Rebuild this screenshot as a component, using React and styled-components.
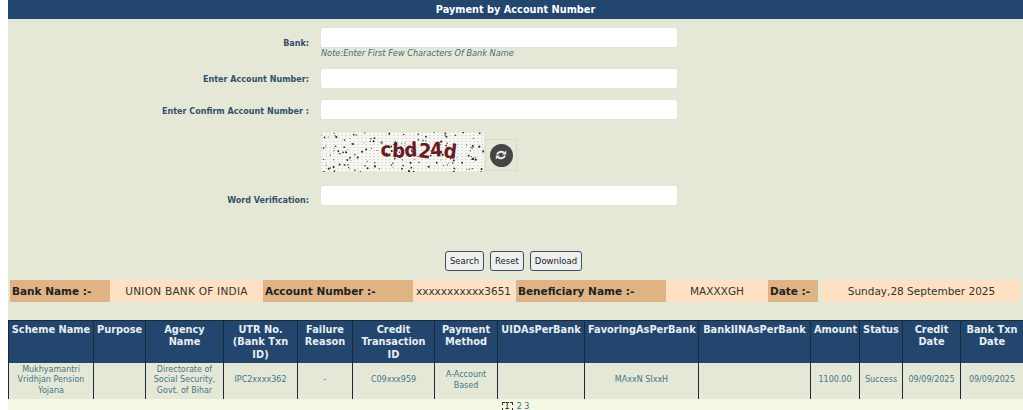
import React from "react";
import styled, { createGlobalStyle } from "styled-components";

const Global = createGlobalStyle`
  html, body {
    margin: 0;
    padding: 0;
    background: #fff;
    overflow: hidden;
  }
  body {
    font-family: "DejaVu Sans", Verdana, sans-serif;
  }
`;

const Page = styled.div`
  width: 1023px;
  height: 410px;
  padding-left: 8px;
  box-sizing: border-box;
  background: #e5e8d6;
  background-clip: content-box;
  overflow: hidden;
`;

const Header = styled.div`
  height: 19px;
  line-height: 19px;
  background: #23466f;
  color: #fff;
  font-size: 9.75px;
  font-weight: bold;
  text-align: center;
`;

const Form = styled.div`
  padding-top: 9px;
`;

const Row = styled.div`
  display: grid;
  grid-template-columns: 301px 356px;
  column-gap: 12px;
  align-items: center;
  margin-bottom: ${(p) => p.$mb || 0}px;
`;

const Label = styled.label`
  font-size: 8.05px;
  font-weight: bold;
  color: #34506a;
  text-align: right;
  padding-top: ${(p) => p.$pt || 0}px;
`;

const Input = styled.input`
  display: block;
  width: 100%;
  height: 19px;
  box-sizing: border-box;
  border: none;
  border-radius: 2px;
  background: #fff;
  box-shadow: 0 0 1px #c8cabc;
`;

const Note = styled.div`
  height: 9px;
  margin-top: 2px;
  font-size: 8.2px;
  line-height: 9px;
  font-style: italic;
  color: #3b6f7d;
  white-space: nowrap;
`;

const CaptchaWrap = styled.div`
  display: flex;
  align-items: flex-end;
  gap: 1px;
`;

const CaptchaImg = styled.svg`
  display: block;
  width: 163px;
  height: 40px;
`;

const RefreshBtn = styled.div`
  width: 32px;
  height: 32px;
  margin-bottom: 1px;
  box-sizing: border-box;
  border: 1px solid #d9dccb;
  display: flex;
  align-items: center;
  justify-content: center;
`;

const RefreshCircle = styled.div`
  width: 23px;
  height: 23px;
  border-radius: 50%;
  background: #454545;
  display: flex;
  align-items: center;
  justify-content: center;
`;

const Buttons = styled.div`
  display: flex;
  justify-content: center;
  gap: 6px;
  padding-top: 46px;
  padding-right: 4px;
`;

const Button = styled.button`
  height: 20px;
  padding: 0 4px;
  box-sizing: border-box;
  border: 1px solid #3d4f5e;
  border-radius: 3px;
  background: #edf0ee;
  color: #222;
  font-family: "DejaVu Sans", sans-serif;
  font-size: 8.5px;
  cursor: pointer;
`;

const Summary = styled.div`
  display: grid;
  grid-template-columns: 100px 153px 150px 103px 150px 102px 50px 205px;
  height: 22px;
  margin: 9px 0 18px 2px;
  line-height: 22px;
  font-size: 10.5px;
`;

const SumLabel = styled.div`
  background: #dfb384;
  color: #222;
  font-weight: bold;
  padding-left: 2px;
  white-space: nowrap;
`;

const SumValue = styled.div`
  background: #fde1c2;
  color: #333;
  text-align: center;
  letter-spacing: ${(p) => p.$ls || 0}px;
  margin-left: ${(p) => p.$ml || 0}px;
  margin-right: ${(p) => p.$mr || 0}px;
  white-space: nowrap;
`;

const Table = styled.table`
  width: 1015px;
  border-collapse: collapse;
  table-layout: fixed;
`;

const Th = styled.th`
  width: ${(p) => p.$w}px;
  height: 42px;
  box-sizing: border-box;
  padding: 3px ${(p) => p.$px ?? 3}px 0;
  vertical-align: top;
  background: #23466f;
  color: #e9eef2;
  border: 1px solid #1b2a38;
  border-width: 1px 1px 0;
  font-size: 9.8px;
  line-height: 12.4px;
  font-weight: bold;
  text-align: center;
`;

const Td = styled.td`
  height: 36px;
  padding: 0 1px;
  background: #e5e8d6;
  color: #44758c;
  border: 1px solid #1b2a38;
  border-width: 0 1px;
  font-size: 8px;
  line-height: 10.5px;
  text-align: center;
`;

const Pager = styled.div`
  height: 11px;
  background: #f6f8e6;
  text-align: center;
  font-size: 8px;
  line-height: 15px;
  color: #3e6a80;
  overflow: hidden;
`;

const PagerCurrent = styled.span`
  display: inline-block;
  height: 9px;
  line-height: 9px;
  outline: 1px dashed #333;
  outline-offset: -1px;
  color: #111;
  padding: 0 3px;
  margin-right: 4px;
`;

const columns = [
  { name: "Scheme Name", w: 85, px: 0, value: "Mukhyamantri Vridhjan Pension Yojana" },
  { name: "Purpose", w: 52, value: "" },
  { name: "Agency Name", w: 78, value: "Directorate of Social Security, Govt. of Bihar" },
  { name: "UTR No. (Bank Txn ID)", w: 74, value: "IPC2xxxx362" },
  { name: "Failure Reason", w: 55, value: "-" },
  { name: "Credit Transaction ID", w: 82, value: "C09xxx959" },
  { name: "Payment Method", w: 63, value: "A-Account Based" },
  { name: "UIDAsPerBank", w: 87, value: "" },
  { name: "FavoringAsPerBank", w: 114, value: "MAxxN SIxxH" },
  { name: "BankIINAsPerBank", w: 112, value: "" },
  { name: "Amount", w: 49, value: "1100.00" },
  { name: "Status", w: 43, value: "Success" },
  { name: "Credit Date", w: 58, value: "09/09/2025" },
  { name: "Bank Txn Date", w: 63, value: "09/09/2025" },
];

// fixed pseudo random specks for the captcha noise
const rnd = (n) => {
  const v = Math.sin(n * 12.9898) * 43758.5453;
  return v - Math.floor(v);
};
const specks = Array.from({ length: 170 }, (_, i) => ({
  x: rnd(i + 1) * 163,
  y: rnd(i + 500) * 40,
  r: 0.4 + rnd(i + 900) * 0.7,
}));

const Captcha = () => (
  <CaptchaImg viewBox="0 0 163 40">
    <defs>
      <pattern id="grain" width="4" height="3" patternUnits="userSpaceOnUse">
        <rect width="4" height="3" fill="#f6f6f2" />
        <rect width="2" height="1" fill="#dcdcd6" />
      </pattern>
    </defs>
    <rect width="163" height="40" fill="url(#grain)" />
    {specks.map((s, i) => (
      <circle key={i} cx={s.x} cy={s.y} r={s.r} fill="#2a2a2a" />
    ))}
    <text
      x="60"
      y="25"
      fontFamily="DejaVu Sans, sans-serif"
      fontWeight="bold"
      fontSize="20"
      fill="#6a1a24"
      textLength="75"
      lengthAdjust="spacingAndGlyphs"
      rotate="-5 4 -3 7 -4 8"
    >
      cbd24d
    </text>
  </CaptchaImg>
);

const SyncIcon = () => (
  <svg width="12" height="12" viewBox="0 0 12 12" fill="none">
    <path d="M2 5.5C2.8 3 6.4 2 8.8 3.6" stroke="#eee" strokeWidth="2" />
    <path d="M7 5.4h4.2V1.4z" fill="#eee" />
    <path d="M10 6.5C9.2 9 5.6 10 3.2 8.4" stroke="#eee" strokeWidth="2" />
    <path d="M5 6.6H.8v4z" fill="#eee" />
  </svg>
);

const App = () => (
  <Page>
    <Global />
    <Header>Payment by Account Number</Header>
    <Form>
      <Row $mb={11}>
        <Label>Bank:</Label>
        <div>
          <Input />
          <Note>Note:Enter First Few Characters Of Bank Name</Note>
        </div>
      </Row>
      <Row $mb={12}>
        <Label $pt={2}>Enter Account Number:</Label>
        <Input />
      </Row>
      <Row $mb={13}>
        <Label $pt={3}>Enter Confirm Account Number :</Label>
        <Input />
      </Row>
      <Row $mb={14}>
        <span />
        <CaptchaWrap>
          <Captcha />
          <RefreshBtn>
            <RefreshCircle>
              <SyncIcon />
            </RefreshCircle>
          </RefreshBtn>
        </CaptchaWrap>
      </Row>
      <Row>
        <Label $pt={10}>Word Verification:</Label>
        <Input />
      </Row>
      <Buttons>
        <Button>Search</Button>
        <Button>Reset</Button>
        <Button>Download</Button>
      </Buttons>
    </Form>
    <Summary>
      <SumLabel>Bank Name :-</SumLabel>
      <SumValue $ls={0.26}>UNION BANK OF INDIA</SumValue>
      <SumLabel>Account Number :-</SumLabel>
      <SumValue $mr={2}>xxxxxxxxxxx3651</SumValue>
      <SumLabel>Beneficiary Name :-</SumLabel>
      <SumValue>MAXXXGH</SumValue>
      <SumLabel>Date :-</SumLabel>
      <SumValue $ml={4} $mr={2}>Sunday,28 September 2025</SumValue>
    </Summary>
    <Table>
      <thead>
        <tr>
          {columns.map((c) => (
            <Th key={c.name} $w={c.w} $px={c.px}>
              {c.name}
            </Th>
          ))}
        </tr>
      </thead>
      <tbody>
        <tr>
          {columns.map((c) => (
            <Td key={c.name}>{c.value}</Td>
          ))}
        </tr>
      </tbody>
    </Table>
    <Pager>
      <PagerCurrent>1</PagerCurrent>2 3
    </Pager>
  </Page>
);

export default App;
